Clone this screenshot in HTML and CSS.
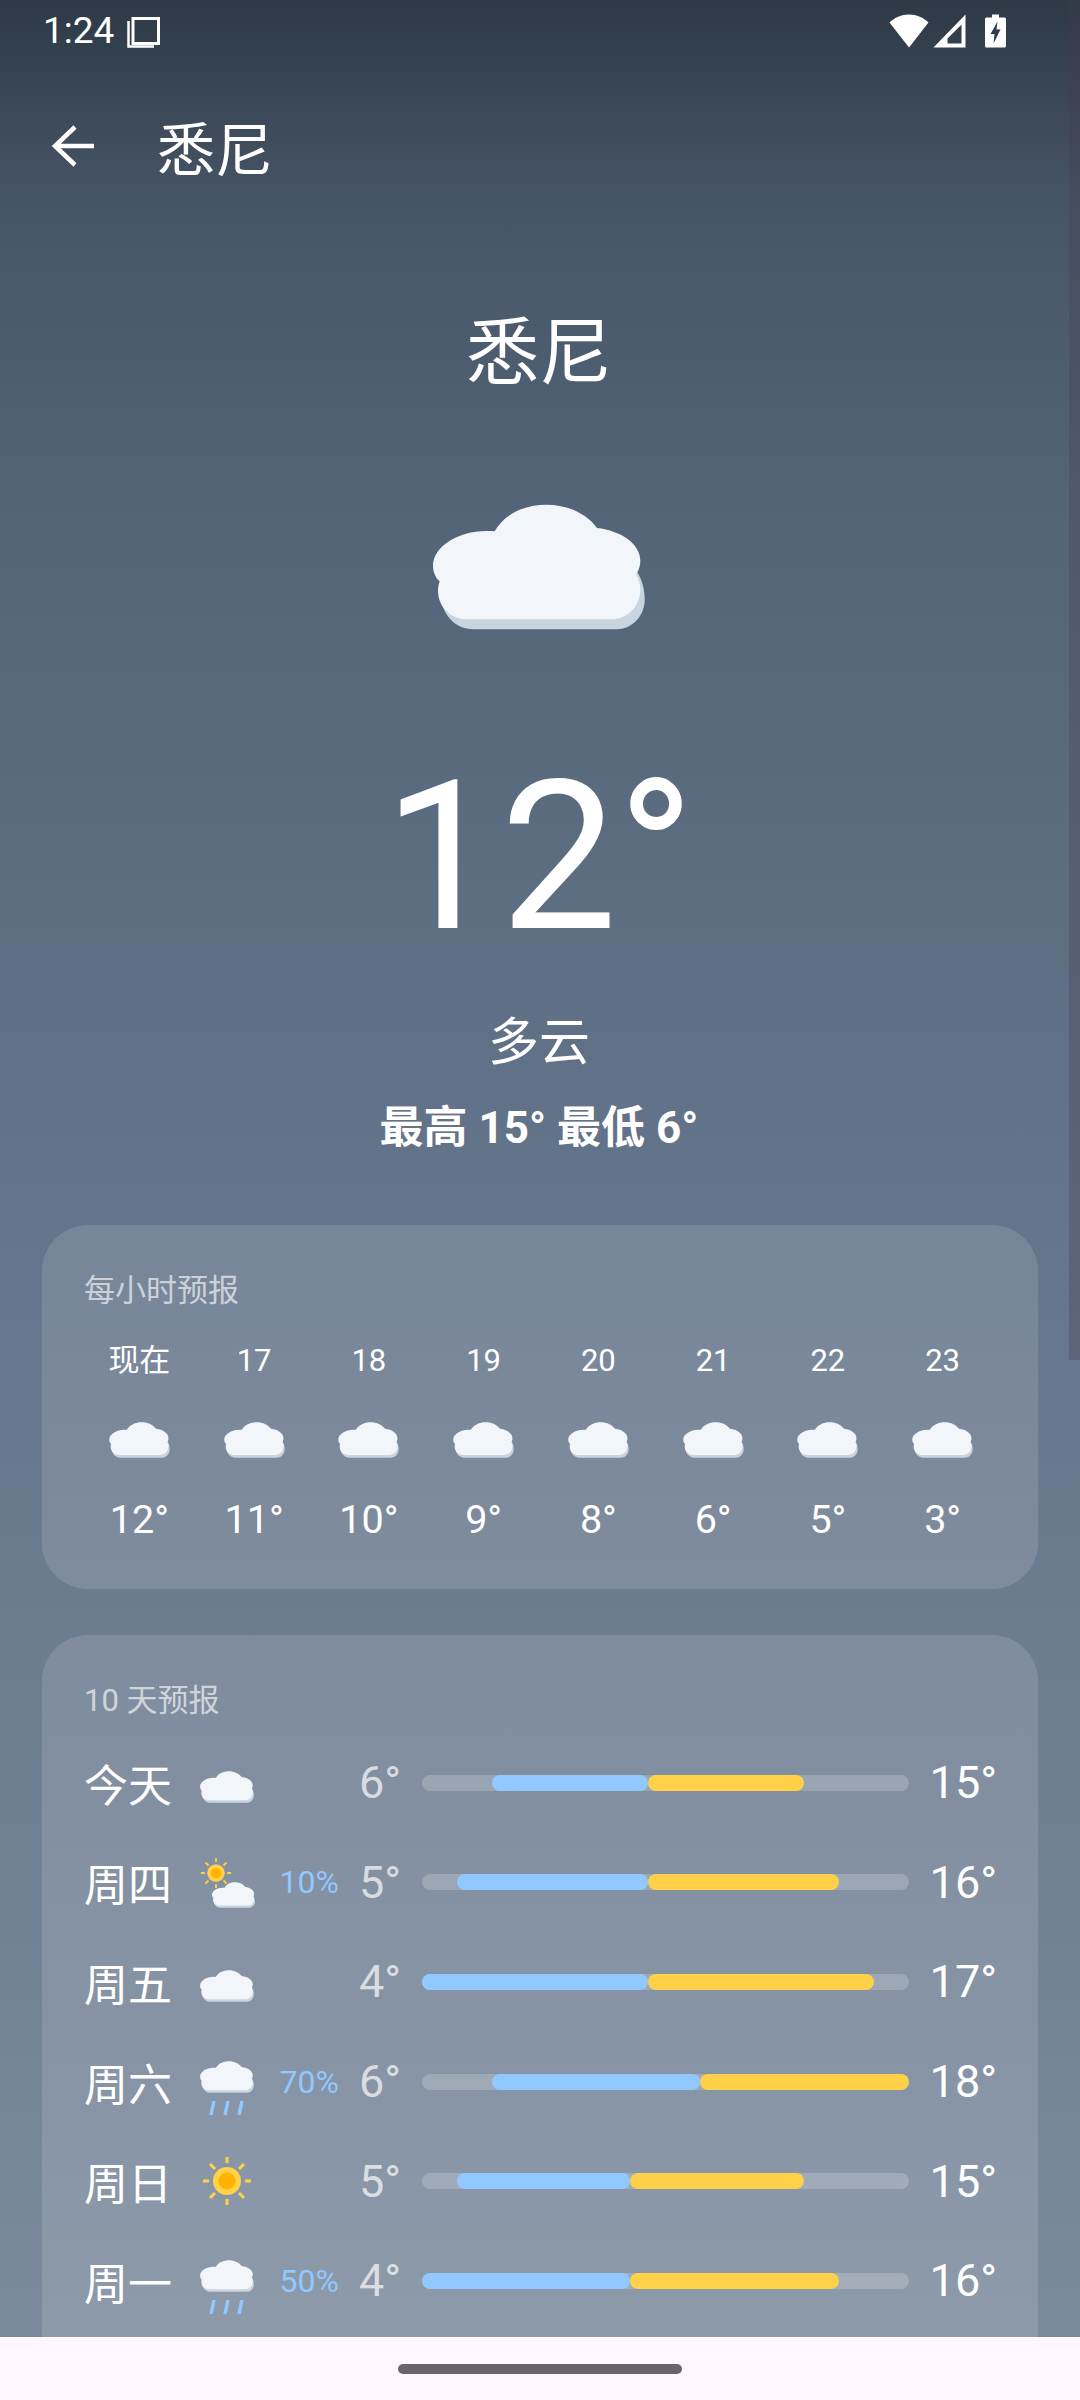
FILE: index.html
```html
<!DOCTYPE html>
<html lang="zh">
<head>
  <meta charset="UTF-8">
  <title>悉尼</title>
  <link rel="stylesheet" href="styles.css">
</head>
<body>
  <svg class="defs" width="0" height="0">
    <symbol id="cloud" viewBox="160 100 636 378">
      <path fill="#c8d4e0" d="M770 300C788 325 796 360 795 392C792 440 755 476 710 476H280C238 476 205 450 190 410L300 300Z"/>
      <path fill="#f2f5fa" d="M345 182C375 128 438 102 500 102C565 102 622 130 652 172C725 180 782 220 782 270C782 285 778 298 769 311C778 325 782 340 782 360C780 410 740 446 695 446H265C215 446 175 410 175 360C175 350 177 340 180 332C167 320 160 303 160 285C160 222 250 172 345 182Z"/>
    </symbol>
    <symbol id="sun" viewBox="0 0 48 48">
      <g stroke="#ffd24a" stroke-width="3">
        <path d="M24 0V6M24 42V48M0 24H6M42 24H48M7 7L12 12M36 36L41 41M41 7L36 12M12 36L7 41"/>
      </g>
      <circle cx="24" cy="24" r="14" fill="#ffd24a"/>
      <circle cx="24" cy="24" r="8.5" fill="#ffb300"/>
    </symbol>
    <symbol id="drops" viewBox="0 0 36 14">
      <path stroke="#90c8ff" stroke-width="3.500" d="M5 0L2 14M19 0L16 14M33 0L30 14"/>
    </symbol>
  </svg>

  <div class="screen">
    <div class="scroll">
      <div class="status">
        <div class="status-left">
          <span class="time">1:24</span>
          <svg class="copy" width="34" height="32" viewBox="0 0 34 32">
            <path fill="none" stroke="#fff" stroke-width="3" d="M6 2.500H31.500V27.500H6Z"/>
            <path fill="none" stroke="#fff" stroke-width="2.500" d="M1.500 5V30.500H27"/>
          </svg>
        </div>
        <div class="status-right">
          <svg width="40" height="34" viewBox="0 0 40 34"><path fill="#fff" d="M20 33.500L0.500 8.500C5.500 3.500 12.500 0.500 20 0.500C27.500 0.500 34.500 3.500 39.500 8.500Z"/></svg>
          <svg width="33" height="34" viewBox="0 0 33 34"><path fill="#fff" fill-rule="evenodd" d="M32.500 0.500V33.500H0.500ZM28.500 10.500L14.500 24.500V29.500H28.500Z"/></svg>
          <svg width="21" height="34" viewBox="0 0 21 34"><path fill="#fff" d="M7 0.500H14V3.500H19.500C20.300 3.500 21 4.200 21 5V32C21 32.800 20.300 33.500 19.500 33.500H1.500C0.700 33.500 0 32.800 0 32V5C0 4.200 0.700 3.500 1.500 3.500H7Z"/><path fill="#2f3b49" d="M12.500 7.500L5.500 20H9.500L8.500 29.500L15.500 15.500H11.500Z"/></svg>
        </div>
      </div>

      <div class="toolbar">
        <svg class="back" width="44" height="44" viewBox="0 0 44 44">
          <path fill="none" stroke="#fff" stroke-width="4.500" d="M43 22H4M24 3L4 22L24 41"/>
        </svg>
        <span class="toolbar-title">悉尼</span>
      </div>

      <div class="hero">
        <div class="city">悉尼</div>
        <svg class="hero-icon" width="212" height="126"><use href="#cloud"/></svg>
        <div class="temp">12°</div>
        <div class="cond">多云</div>
        <div class="hilo">最高 15° 最低 6°</div>
      </div>

      <section class="card hourly">
        <div class="card-title">每小时预报</div>
        <div class="hours">
          <div class="hour"><span class="hour-label">现在</span><svg class="hour-icon" width="61" height="36"><use href="#cloud"/></svg><span class="hour-temp">12°</span></div>
          <div class="hour"><span class="hour-label">17</span><svg class="hour-icon" width="61" height="36"><use href="#cloud"/></svg><span class="hour-temp">11°</span></div>
          <div class="hour"><span class="hour-label">18</span><svg class="hour-icon" width="61" height="36"><use href="#cloud"/></svg><span class="hour-temp">10°</span></div>
          <div class="hour"><span class="hour-label">19</span><svg class="hour-icon" width="61" height="36"><use href="#cloud"/></svg><span class="hour-temp">9°</span></div>
          <div class="hour"><span class="hour-label">20</span><svg class="hour-icon" width="61" height="36"><use href="#cloud"/></svg><span class="hour-temp">8°</span></div>
          <div class="hour"><span class="hour-label">21</span><svg class="hour-icon" width="61" height="36"><use href="#cloud"/></svg><span class="hour-temp">6°</span></div>
          <div class="hour"><span class="hour-label">22</span><svg class="hour-icon" width="61" height="36"><use href="#cloud"/></svg><span class="hour-temp">5°</span></div>
          <div class="hour"><span class="hour-label">23</span><svg class="hour-icon" width="61" height="36"><use href="#cloud"/></svg><span class="hour-temp">3°</span></div>
        </div>
      </section>

      <section class="card daily">
        <div class="card-title">10 天预报</div>
        <div class="days">
          <div class="day">
            <span class="day-name">今天</span>
            <svg class="day-icon" width="58" height="70"><use href="#cloud" x="2" y="23" width="54" height="32"/></svg>
            <span class="pop"></span>
            <span class="low">6°</span>
            <div class="track"><i class="cold" style="margin-left:14.4%;width:32%"></i><i class="warm" style="width:32%"></i></div>
            <span class="high">15°</span>
          </div>
          <div class="day">
            <span class="day-name">周四</span>
            <svg class="day-icon" width="58" height="70"><use href="#sun" x="3" y="11" width="30" height="30"/><use href="#cloud" x="14" y="35" width="43" height="26"/></svg>
            <span class="pop">10%</span>
            <span class="low">5°</span>
            <div class="track"><i class="cold" style="margin-left:7.2%;width:39.2%"></i><i class="warm" style="width:39.2%"></i></div>
            <span class="high">16°</span>
          </div>
          <div class="day">
            <span class="day-name">周五</span>
            <svg class="day-icon" width="58" height="70"><use href="#cloud" x="2" y="23" width="54" height="32"/></svg>
            <span class="pop"></span>
            <span class="low">4°</span>
            <div class="track"><i class="cold" style="width:46.4%"></i><i class="warm" style="width:46.4%"></i></div>
            <span class="high">17°</span>
          </div>
          <div class="day">
            <span class="day-name">周六</span>
            <svg class="day-icon" width="58" height="70"><use href="#cloud" x="2" y="14" width="54" height="32"/><use href="#drops" x="11" y="54" width="36" height="14"/></svg>
            <span class="pop">70%</span>
            <span class="low">6°</span>
            <div class="track"><i class="cold" style="margin-left:14.4%;width:42.7%"></i><i class="warm" style="width:42.9%"></i></div>
            <span class="high">18°</span>
          </div>
          <div class="day">
            <span class="day-name">周日</span>
            <svg class="day-icon" width="58" height="70"><use href="#sun" x="5" y="11" width="48" height="48"/></svg>
            <span class="pop"></span>
            <span class="low">5°</span>
            <div class="track"><i class="cold" style="margin-left:7.2%;width:35.5%"></i><i class="warm" style="width:35.7%"></i></div>
            <span class="high">15°</span>
          </div>
          <div class="day">
            <span class="day-name">周一</span>
            <svg class="day-icon" width="58" height="70"><use href="#cloud" x="2" y="14" width="54" height="32"/><use href="#drops" x="11" y="54" width="36" height="14"/></svg>
            <span class="pop">50%</span>
            <span class="low">4°</span>
            <div class="track"><i class="cold" style="width:42.7%"></i><i class="warm" style="width:42.9%"></i></div>
            <span class="high">16°</span>
          </div>
        </div>
      </section>
      <div class="scrollbar"></div>
    </div>
    <div class="navbar"><div class="pill"></div></div>
  </div>
</body>
</html>
```

FILE: styles.css
```css
* {
  box-sizing: border-box;
}

html, body {
  margin: 0;
  padding: 0;
}

body {
  font-family: Roboto, "Noto Sans CJK SC", sans-serif;
  color: #fff;
  background: #fef7ff;
}

.defs {
  position: absolute;
}

.screen {
  width: 1080px;
  height: 2400px;
  display: flex;
  flex-direction: column;
  overflow: hidden;
}

.scroll {
  position: relative;
  flex: 1;
  min-height: 0;
  overflow: hidden;
  background: linear-gradient(#2d3946 0, #465566 200px, #536478 500px, #64748a 1200px, #6b7b90 1600px, #7b8b9d 2337px);
}

.scrollbar {
  position: absolute;
  top: 0;
  right: 0;
  width: 11px;
  height: 1360px;
  background: rgba(70, 60, 80, 0.3);
}

/* status bar */
.status {
  height: 62px;
  display: flex;
  justify-content: space-between;
  padding: 0 74px 0 43px;
}

.status-left {
  display: flex;
  align-items: flex-start;
}

.time {
  font-size: 37px;
  line-height: 62px;
}

.copy {
  margin: 16px 0 0 13px;
}

.status-right {
  display: flex;
  gap: 4px;
  padding-top: 14px;
}

.status-right svg:last-child {
  margin-left: 15px;
}

/* toolbar */
.toolbar {
  height: 168px;
  display: flex;
  align-items: center;
  padding-left: 51px;
}

.back {
  margin-right: 62px;
}

.toolbar-title {
  font-size: 58px;
  line-height: 70px;
  margin-top: 9px;
}

/* hero */
.hero {
  display: flex;
  flex-direction: column;
  align-items: center;
  padding-right: 2px;
}

.city {
  margin-top: 73px;
  font-size: 73px;
  line-height: 100px;
}

.hero-icon {
  margin-top: 101px;
}

.temp {
  margin-top: 107px;
  font-size: 208px;
  font-weight: 400;
  line-height: 240px;
}

.cond {
  margin-top: 31px;
  font-size: 51px;
  line-height: 70px;
}

.hilo {
  margin-top: 20px;
  font-size: 44px;
  font-weight: 700;
  line-height: 60px;
}

/* cards */
.card {
  margin: 0 42px;
  padding: 46px 40px 44px;
  background: rgba(255, 255, 255, 0.13);
  border-radius: 46px;
}

.card-title {
  font-size: 31px;
  line-height: 40px;
  padding-left: 2px;
  color: rgba(255, 255, 255, 0.65);
}

.hourly {
  margin-top: 67px;
  padding-right: 38px;
}

.hours {
  display: grid;
  grid-template-columns: repeat(8, 1fr);
  margin-top: 30px;
}

.hour {
  display: flex;
  flex-direction: column;
  align-items: center;
}

.hour-label {
  font-size: 31px;
  line-height: 40px;
}

.hour-icon {
  margin-top: 41px;
}

.hour-temp {
  margin-top: 37px;
  font-size: 39.500px;
  line-height: 50px;
}

.daily {
  margin-top: 46px;
  padding-right: 41px;
  padding-bottom: 200px;
}

.days {
  margin-top: 12px;
}

.day {
  height: 99.600px;
  display: flex;
  align-items: center;
}

.day-name {
  width: 116px;
  padding-left: 2px;
  font-size: 44px;
}

.day-icon {
  flex: none;
}

.pop {
  width: 83px;
  text-align: right;
  font-size: 32px;
  color: #90c8ff;
}

.low {
  width: 62px;
  text-align: right;
  font-size: 45px;
  color: rgba(255, 255, 255, 0.7);
}

.high {
  width: 88px;
  text-align: right;
  font-size: 45px;
}

.track {
  flex: 1;
  height: 16px;
  margin-left: 21px;
  display: flex;
  border-radius: 8px;
  background: rgba(255, 255, 255, 0.2);
}

.cold,
.warm {
  display: block;
  border-radius: 8px;
}

.cold {
  background: #90c8ff;
}

.warm {
  background: #ffd149;
}

/* nav bar */
.navbar {
  height: 63px;
  flex: none;
  display: flex;
  justify-content: center;
  padding-top: 27px;
  background: #fef7ff;
}

.pill {
  width: 284px;
  height: 10px;
  border-radius: 5px;
  background: #69656a;
}
```
